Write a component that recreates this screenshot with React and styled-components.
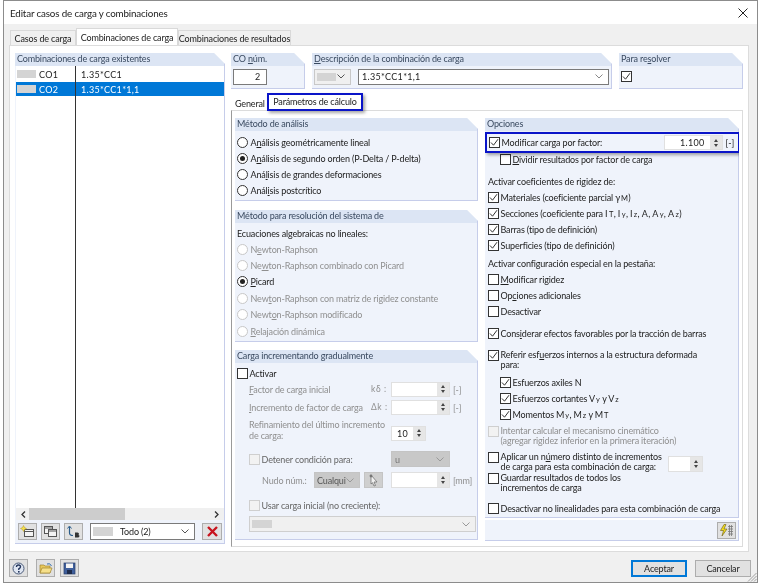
import React from 'react';
import styled, { createGlobalStyle } from 'styled-components';

const GlobalStyle = createGlobalStyle`
  html, body {
    margin: 0;
    padding: 0;
    background: #fff;
  }
  body {
    font-family: "Lato", "Open Sans", sans-serif;
    font-size: 9px;
    letter-spacing: -0.15px;
    color: #222;
    overflow: hidden;
  }
  u {
    text-underline-offset: 1px;
  }
`;

const Dialog = styled.div`
  box-sizing: border-box;
  width: 755px;
  height: 583px;
  margin-left: 3px;
  border: 1px solid #8c8c8c;
  display: flex;
  flex-direction: column;
  background: #f0f0f0;
  position: relative;
  filter: blur(0.3px);
`;

const TitleBar = styled.div`
  height: 23px;
  background: #fff;
  display: flex;
  align-items: center;
  justify-content: space-between;
  padding: 0 9px 0 6px;
  font-size: 9.8px;
  flex: none;
`;

const CloseIcon = styled.svg`
  width: 10px;
  height: 10px;
  stroke: #222;
  stroke-width: 1;
`;

const TabStrip = styled.div`
  display: flex;
  align-items: flex-end;
  height: 21px;
  padding-left: 6px;
  flex: none;
`;

const Tab = styled.div`
  width: ${(p) => p.$w}px;
  height: ${(p) => (p.$active ? 17 : 15)}px;
  box-sizing: border-box;
  display: flex;
  align-items: center;
  justify-content: center;
  background: ${(p) => (p.$active ? '#fff' : '#f0f0f0')};
  border: 1px solid #d9d9d9;
  border-bottom: none;
  white-space: nowrap;
  flex: none;
`;

const MainPanel = styled.div`
  margin-left: 5px;
  width: 740px;
  height: 507px;
  box-sizing: border-box;
  background: #fff;
  border: 1px solid #dcdcdc;
  padding: 7px 5px 5px 5px;
  display: flex;
  gap: 6px;
  flex: none;
`;

const Group = styled.section`
  display: flex;
  flex-direction: column;
  box-sizing: border-box;
  width: ${(p) => (p.$w ? `${p.$w}px` : 'auto')};
  height: ${(p) => (p.$h ? `${p.$h}px` : 'auto')};
  margin-top: ${(p) => p.$mt || 0}px;
  background: #eff3fb;
  border-bottom: 1px solid #c6cdea;
  border-right: 1px solid #c6cdea;
  clip-path: polygon(0 0, calc(100% - 11px) 0, 100% 11px, 100% 100%, 0 100%);
  flex: none;
`;

const GroupTitle = styled.div`
  height: 13px;
  line-height: 12px;
  padding-left: 2px;
  background: #dce5f4;
  color: #3a4a60;
  flex: none;
  white-space: nowrap;
`;

const ListGroup = styled(Group)`
  width: 210px;
  height: 491px;
`;

const ListBody = styled.div`
  height: 442px;
  margin-left: 1px;
  background: #fff;
  position: relative;
  display: flex;
  flex-direction: column;
  padding-top: 1px;
  box-sizing: border-box;
  flex: none;
`;

const ColumnLine = styled.div`
  position: absolute;
  left: 59px;
  top: 0;
  bottom: 0;
  width: 1px;
  background: #333;
`;

const ListRow = styled.div`
  display: flex;
  align-items: center;
  height: 14px;
  margin-bottom: 1px;
  background: ${(p) => (p.$selected ? '#0078d7' : '#fff')};
  color: ${(p) => (p.$selected ? '#fff' : '#222')};
  letter-spacing: 0.3px;
`;

const Swatch = styled.span`
  display: block;
  width: ${(p) => p.$w || 19}px;
  height: ${(p) => p.$h || 8}px;
  background: #d4d4d4;
  margin-left: ${(p) => p.$ml ?? 1}px;
  flex: none;
`;

const ListCode = styled.span`
  width: 39px;
  padding-left: 3px;
`;

const ListDesc = styled.span`
  padding-left: 3px;
`;

const ScrollBar = styled.div`
  height: 12px;
  margin-left: 1px;
  background: #f0f0f0;
  display: flex;
  align-items: center;
  justify-content: space-between;
  position: relative;
  padding: 0 5px;
  flex: none;
`;

const ScrollThumb = styled.div`
  position: absolute;
  left: 13px;
  top: 0;
  width: 96px;
  height: 12px;
  background: #cdcdcd;
`;

const ListTools = styled.div`
  display: flex;
  align-items: center;
  padding: 3px 0 0 3px;
`;

const IconButton = styled.div`
  box-sizing: border-box;
  width: ${(p) => p.$w || 19}px;
  height: ${(p) => p.$h || 17}px;
  margin-right: ${(p) => p.$mr ?? 4}px;
  margin-left: ${(p) => p.$ml || 0}px;
  background: ${(p) => p.$bg || '#e1e1e1'};
  border: 1px solid ${(p) => p.$border || '#adadad'};
  display: flex;
  align-items: center;
  justify-content: center;
  flex: none;
`;

const Combo = styled.div`
  box-sizing: border-box;
  width: ${(p) => p.$w}px;
  height: ${(p) => p.$h || 16}px;
  margin: ${(p) => p.$m || 0};
  display: flex;
  align-items: center;
  justify-content: space-between;
  padding: 0 5px 0 ${(p) => p.$pl ?? 3}px;
  background: ${(p) => p.$bg || '#fff'};
  border: 1px solid ${(p) => p.$border || '#7a7a7a'};
  color: ${(p) => p.$color || '#222'};
  flex: none;
  letter-spacing: ${(p) => p.$ls || '-0.15px'};
  white-space: nowrap;
  overflow: hidden;
`;

const ComboText = styled.span`
  flex: 1;
  margin-left: ${(p) => p.$ml || 0}px;
`;

const Chevron = styled.svg`
  width: 8px;
  height: 5px;
  fill: none;
  stroke: ${(p) => p.$c || '#555'};
  stroke-width: 1;
  flex: none;
`;

const RightColumn = styled.div`
  width: 512px;
  display: flex;
  flex-direction: column;
`;

const TopRow = styled.div`
  display: flex;
  gap: 7px;
  height: 36px;
  flex: none;
`;

const TopBody = styled.div`
  flex: 1;
  display: flex;
  align-items: center;
  padding-left: 2px;
  padding-bottom: 1px;
`;

const NumBox = styled.div`
  box-sizing: border-box;
  width: 34px;
  height: 16px;
  border: 1px solid #7a7a7a;
  background: #fff;
  display: flex;
  align-items: center;
  justify-content: flex-end;
  padding-right: 6px;
`;

const SubTabs = styled.div`
  height: 22px;
  display: flex;
  align-items: flex-end;
  padding-left: 1px;
  flex: none;
`;

const SubTab = styled.div`
  width: 34px;
  height: 13px;
  padding-left: 3px;
  box-sizing: border-box;
  display: flex;
  align-items: center;
  margin-bottom: 1px;
`;

const HighlightTab = styled.div`
  box-sizing: border-box;
  width: 96px;
  height: 18px;
  margin-left: 1px;
  padding-bottom: 2px;
  display: flex;
  align-items: center;
  justify-content: center;
  background: #fff;
  border: 2px solid #0a14c8;
  box-shadow: 2px 2px 3px rgba(0, 0, 0, 0.35);
  position: relative;
  z-index: 2;
  white-space: nowrap;
`;

const SubPanel = styled.div`
  height: 437px;
  box-sizing: border-box;
  margin-top: -1px;
  background: #fff;
  border: 1px solid #dcdcdc;
  border-left-color: #9a9a9a;
  padding: 7px 3px 5px 3px;
  display: flex;
  gap: 7px;
  flex: none;
`;

const Column = styled.div`
  display: flex;
  flex-direction: column;
  width: ${(p) => p.$w}px;
`;

const Body = styled.div`
  padding: ${(p) => p.$pad || '2px 0 0 2px'};
  display: flex;
  flex-direction: column;
  flex: 1;
`;

const Row = styled.div`
  display: flex;
  align-items: ${(p) => p.$align || 'center'};
  min-height: 16px;
  margin-top: ${(p) => p.$mt || 0}px;
  margin-left: ${(p) => p.$ml || 0}px;
  color: ${(p) => (p.$muted ? '#8f8f8f' : 'inherit')};
  white-space: nowrap;
`;

const Multi = styled.span`
  display: block;
  line-height: ${(p) => p.$lh || 10}px;
`;

const Strong = styled.span`
  color: #666;
`;

const BoxMark = styled.span`
  box-sizing: border-box;
  width: 11px;
  height: 11px;
  margin-right: 1.5px;
  margin-top: ${(p) => p.$mt || 0}px;
  border: 1px solid ${(p) => (p.$disabled ? '#cfcfcf' : '#333')};
  background: ${(p) => (p.$disabled ? '#f2f2f2' : '#fff')};
  display: flex;
  align-items: center;
  justify-content: center;
  flex: none;
`;

const Tick = styled.svg`
  width: 9px;
  height: 9px;
  fill: none;
  stroke: #333;
  stroke-width: 1;
`;

const RadioMark = styled.span`
  box-sizing: border-box;
  width: 11px;
  height: 11px;
  margin-right: 2.5px;
  border-radius: 50%;
  border: 1px solid ${(p) => (p.$disabled ? '#c8c8c8' : '#333')};
  background: #fff;
  display: flex;
  align-items: center;
  justify-content: center;
  flex: none;
`;

const RadioDot = styled.span`
  width: 5px;
  height: 5px;
  border-radius: 50%;
  background: #222;
`;

const SpinField = styled.div`
  box-sizing: border-box;
  width: ${(p) => p.$w || 59}px;
  height: ${(p) => p.$h || 15}px;
  margin-left: ${(p) => p.$ml || 0}px;
  margin-top: ${(p) => p.$mt || 0}px;
  display: flex;
  border: 1px solid #e0e0e0;
  background: #fff;
  flex: none;
`;

const SpinValue = styled.span`
  flex: 1;
  text-align: right;
  padding-right: 5px;
  line-height: 13px;
  letter-spacing: 0.3px;
  color: #222;
`;

const SpinButtons = styled.span`
  width: 12px;
  background: #e6e6e6;
  display: flex;
  flex-direction: column;
  align-items: center;
  justify-content: center;
  gap: 2px;
  flex: none;
`;

const Arrow = styled.span`
  width: 0;
  height: 0;
  border-left: 2.5px solid transparent;
  border-right: 2.5px solid transparent;
  ${(p) => (p.$down ? 'border-top: 3px solid #444;' : 'border-bottom: 3px solid #444;')}
`;

const FieldLabel = styled.span`
  width: ${(p) => p.$w}px;
  flex: none;
`;

const Unit = styled.span`
  margin-left: 3px;
  margin-right: ${(p) => p.$mr || 0}px;
`;

const SymbolText = styled.span`
  width: 15px;
  letter-spacing: 0.6px;
  font-size: 8.5px;
  flex: none;
`;

const Small = styled.span`
  font-size: 7.5px;
  letter-spacing: 0.3px;
  margin-left: 1px;
`;

const Sym = styled.span`
  letter-spacing: 0.4px;
`;

const FactorRow = styled.div`
  box-sizing: border-box;
  height: 21px;
  width: 255px;
  margin: 1px 0 0 -3px;
  border: 2px solid #0a14c8;
  box-shadow: 2px 2px 3px rgba(0, 0, 0, 0.35);
  display: flex;
  align-items: center;
  padding-left: 2px;
  position: relative;
  z-index: 2;
  background: #eff3fb;
  flex: none;
`;

const FactorSpacer = styled.span`
  flex: 1;
`;

const BoltBar = styled.div`
  margin-top: 2px;
  height: 20px;
  background: #eff3fb;
  border-bottom: 1px solid #c6cdea;
  border-right: 1px solid #c6cdea;
  display: flex;
  align-items: center;
  justify-content: flex-end;
  padding-right: 2px;
  flex: none;
`;

const Footer = styled.div`
  flex: 1;
  display: flex;
  align-items: flex-start;
  padding: 7px 6px 0 5px;
`;

const FooterSpacer = styled.span`
  flex: 1;
`;

const FooterButton = styled.div`
  box-sizing: border-box;
  width: 56px;
  height: 17px;
  margin-top: 1px;
  margin-left: 8px;
  display: flex;
  align-items: center;
  justify-content: center;
  background: #e1e1e1;
  border: ${(p) => (p.$primary ? '2px solid #0078d7' : '1px solid #adadad')};
`;

const Grip = styled.svg`
  position: absolute;
  right: 0;
  bottom: 0;
  width: 11px;
  height: 11px;
  stroke: #a0a0a0;
  stroke-width: 1;
`;

const ChevronDown = ({ c }) => (
  <Chevron viewBox="0 0 8 5" $c={c}>
    <path d="M0.5 0.5 L4 4 L7.5 0.5" />
  </Chevron>
);

const TickMark = () => (
  <Tick viewBox="0 0 9 9">
    <path d="M1 4.5 L3.5 7.2 L8 1.2" />
  </Tick>
);

const Check = ({ on, disabled, children, mt, ml, align }) => (
  <Row $mt={mt} $ml={ml} $muted={disabled} $align={align}>
    <BoxMark $disabled={disabled}>{on && <TickMark />}</BoxMark>
    <span>{children}</span>
  </Row>
);

const Radio = ({ on, disabled, children, mt }) => (
  <Row $mt={mt} $muted={disabled}>
    <RadioMark $disabled={disabled}>{on && <RadioDot />}</RadioMark>
    <span>{children}</span>
  </Row>
);

const Spin = ({ value, w, h, ml, mt }) => (
  <SpinField $w={w} $h={h} $ml={ml} $mt={mt}>
    <SpinValue>{value}</SpinValue>
    <SpinButtons>
      <Arrow />
      <Arrow $down />
    </SpinButtons>
  </SpinField>
);

const App = () => {
  return (
    <Dialog>
      <GlobalStyle />
      <TitleBar>
        <span>Editar casos de carga y combinaciones</span>
        <CloseIcon viewBox="0 0 10 10">
          <path d="M0.5 0.5 L9.5 9.5 M9.5 0.5 L0.5 9.5" />
        </CloseIcon>
      </TitleBar>

      <TabStrip>
        <Tab $w={66}>Casos de carga</Tab>
        <Tab $w={102} $active>Combinaciones de carga</Tab>
        <Tab $w={113}>Combinaciones de resultados</Tab>
      </TabStrip>

      <MainPanel>
        <ListGroup>
          <GroupTitle>Combinaciones de carga existentes</GroupTitle>
          <ListBody>
            <ListRow>
              <Swatch />
              <ListCode>CO1</ListCode>
              <ListDesc>1.35*CC1</ListDesc>
            </ListRow>
            <ListRow $selected>
              <Swatch />
              <ListCode>CO2</ListCode>
              <ListDesc>1.35*CC1*1,1</ListDesc>
            </ListRow>
            <ColumnLine />
          </ListBody>
          <ScrollBar>
            <svg width="5" height="7" viewBox="0 0 5 7" fill="none" stroke="#333" strokeWidth="1.3">
              <path d="M4 0.5 L1 3.5 L4 6.5" />
            </svg>
            <ScrollThumb />
            <svg width="5" height="7" viewBox="0 0 5 7" fill="none" stroke="#333" strokeWidth="1.3">
              <path d="M1 0.5 L4 3.5 L1 6.5" />
            </svg>
          </ScrollBar>
          <ListTools>
            <IconButton>
              <svg width="15" height="13" viewBox="0 0 15 13">
                <rect x="4.5" y="4.5" width="9" height="7" fill="#f4f4f4" stroke="#555" />
                <path d="M4.5 6.5 H13.5" stroke="#555" />
                <path d="M3.5 0.5 L4.5 2.5 L6.5 3.5 L4.5 4.5 L3.5 6.5 L2.5 4.5 L0.5 3.5 L2.5 2.5 Z" fill="#f4e04a" stroke="#b49a20" strokeWidth="0.5" />
              </svg>
            </IconButton>
            <IconButton>
              <svg width="15" height="13" viewBox="0 0 15 13" fill="#f4f4f4" stroke="#555">
                <rect x="1.5" y="1.5" width="8" height="7" />
                <rect x="5.5" y="4.5" width="8" height="7" />
                <path d="M1.5 3 H9.5 M5.5 6 H13.5" />
              </svg>
            </IconButton>
            <IconButton $mr={7}>
              <svg width="15" height="13" viewBox="0 0 15 13" fill="none">
                <path d="M3.5 2 V8 Q3.5 10.5 7 10.5" stroke="#2b5d8c" strokeWidth="1.2" />
                <path d="M1.5 3.5 L3.5 1 L5.5 3.5" stroke="#2b5d8c" />
                <path d="M9 7.5 H11.5 Q13 7.5 13 9 Q13 10 12 10 Q13.5 10 13.5 11 Q13.5 12.5 11.5 12.5 H9 Z" fill="#333" />
              </svg>
            </IconButton>
            <Combo $w={105} $h={17} $pl={2}>
              <Swatch $w={20} $h={9} $ml={0} />
              <ComboText $ml={7}>Todo (2)</ComboText>
              <ChevronDown />
            </Combo>
            <IconButton $w={20} $h={17} $mr={0} $ml={7}>
              <svg width="11" height="11" viewBox="0 0 11 11" fill="none" stroke="#c8141e" strokeWidth="2.4">
                <path d="M1 1 L10 10 M10 1 L1 10" />
              </svg>
            </IconButton>
          </ListTools>
        </ListGroup>

        <RightColumn>
          <TopRow>
            <Group $w={74}>
              <GroupTitle>CO <u>n</u>úm.</GroupTitle>
              <TopBody>
                <NumBox>2</NumBox>
              </TopBody>
            </Group>
            <Group $w={300}>
              <GroupTitle><u>D</u>escripción de la combinación de carga</GroupTitle>
              <TopBody>
                <Combo $w={37} $border="#c8c8c8" $bg="#f0f0f0" $pl={2}>
                  <Swatch $w={19} $h={8} $ml={0} />
                  <ChevronDown />
                </Combo>
                <Combo $w={251} $m="0 0 0 7px" $pl={3} $ls="0.3px">
                  <ComboText>1.35*CC1*1,1</ComboText>
                  <ChevronDown c="#888" />
                </Combo>
              </TopBody>
            </Group>
            <Group $w={124}>
              <GroupTitle>Para re<u>s</u>olver</GroupTitle>
              <TopBody>
                <BoxMark>
                  <TickMark />
                </BoxMark>
              </TopBody>
            </Group>
          </TopRow>

          <SubTabs>
            <SubTab>General</SubTab>
            <HighlightTab>Parámetros de cálculo</HighlightTab>
          </SubTabs>

          <SubPanel>
            <Column $w={244}>
              <Group $h={83}>
                <GroupTitle>Método de análisis</GroupTitle>
                <Body $pad="3px 0 0 2px">
                  <Radio>A<u>n</u>álisis geométricamente lineal</Radio>
                  <Radio on>A<u>n</u>álisis de segundo orden (P-Delta / P-delta)</Radio>
                  <Radio>Aná<u>l</u>isis de grandes deformaciones</Radio>
                  <Radio>Anál<u>i</u>sis postcrítico</Radio>
                </Body>
              </Group>

              <Group $h={132} $mt={9}>
                <GroupTitle>Método para resolución del sistema de</GroupTitle>
                <Body>
                  <Row>Ecuaciones algebraicas no lineales:</Row>
                  <Radio disabled>N<u>e</u>wton-Raphson</Radio>
                  <Radio disabled>Ne<u>w</u>ton-Raphson combinado con Picard</Radio>
                  <Radio on><u>P</u>icard</Radio>
                  <Radio disabled mt={1}>New<u>t</u>on-Raphson con matriz de rigidez constante</Radio>
                  <Radio disabled>Newt<u>o</u>n-Raphson modificado</Radio>
                  <Radio disabled mt={1}><u>R</u>elajación dinámica</Radio>
                </Body>
              </Group>

              <Group $h={190} $mt={8}>
                <GroupTitle>Carga incrementando gradualmente</GroupTitle>
                <Body>
                  <Check>Activar</Check>
                  <Row $muted $ml={12}>
                    <FieldLabel $w={122}><u>F</u>actor de carga inicial</FieldLabel>
                    <SymbolText>kδ :</SymbolText>
                    <Spin ml={5} />
                    <Unit>[-]</Unit>
                  </Row>
                  <Row $muted $ml={12} $mt={2}>
                    <FieldLabel $w={122}><u>I</u>ncremento de factor de carga</FieldLabel>
                    <SymbolText>Δk :</SymbolText>
                    <Spin ml={5} />
                    <Unit>[-]</Unit>
                  </Row>
                  <Row $muted $ml={12} $mt={4}>
                    <FieldLabel $w={142}>
                      <Multi $lh={11}>Refinamiento del último incremento<br />de carga:</Multi>
                    </FieldLabel>
                    <Spin value="10" w={35} mt={6} />
                  </Row>
                  <Row $ml={12} $mt={10} $muted>
                    <BoxMark $disabled />
                    <FieldLabel $w={129.5}><Strong>Detener condición para:</Strong></FieldLabel>
                    <Combo $w={59} $border="#c4c4c4" $bg="#c8c8c8" $color="#777">
                      <ComboText>u</ComboText>
                      <ChevronDown c="#999" />
                    </Combo>
                  </Row>
                  <Row $ml={25} $mt={5} $muted>
                    <FieldLabel $w={52}>Nudo núm.:</FieldLabel>
                    <Combo $w={46} $border="#c4c4c4" $bg="#c8c8c8" $color="#555" $pl={2}>
                      <ComboText>Cualqui</ComboText>
                      <ChevronDown c="#999" />
                    </Combo>
                    <IconButton $w={19} $h={16} $mr={8} $ml={4} $bg="#cfcfcf" $border="#c4c4c4">
                      <svg width="11" height="13" viewBox="0 0 11 13">
                        <path d="M3 1 L9 8 L6 8 L7.5 11.5 L6 12 L4.5 8.7 L3 10 Z" fill="#f0f0f0" stroke="#666" strokeWidth="0.7" />
                        <circle cx="3" cy="2" r="1.4" fill="#777" />
                      </svg>
                    </IconButton>
                    <Spin h={16} />
                    <Unit>[mm]</Unit>
                  </Row>
                  <Check disabled ml={12} mt={9}>
                    <Strong>Usar carga inicial (no creciente):</Strong>
                  </Check>
                  <Row $ml={12} $mt={3}>
                    <Combo $w={227} $border="#cfcfcf" $bg="#f0f0f0" $pl={2}>
                      <Swatch $w={20} $h={8} $ml={0} />
                      <ChevronDown c="#999" />
                    </Combo>
                  </Row>
                </Body>
              </Group>
            </Column>

            <Column $w={254}>
              <Group $h={400}>
                <GroupTitle>Opciones</GroupTitle>
                <Body $pad="0 0 0 3px">
                  <FactorRow>
                    <BoxMark>
                      <TickMark />
                    </BoxMark>
                    Modificar carga por factor:
                    <FactorSpacer />
                    <Spin value="1.100" w={59} h={15} />
                    <Unit $mr={4}>[-]</Unit>
                  </FactorRow>
                  <Check ml={12} mt={-2}><u>D</u>ividir resultados por factor de carga</Check>
                  <Row $mt={6}>Activar coeficientes de rigidez de:</Row>
                  <Check on>Materiales (coeficiente parcial γ<Small>M</Small>)</Check>
                  <Check on>Secciones (coeficiente para <Sym>I</Sym><Small>T</Small>, <Sym>I</Sym><Small>y</Small>, <Sym>I</Sym><Small>z</Small>, <Sym>A</Sym>, <Sym>A</Sym><Small>y</Small>, <Sym>A</Sym><Small>z</Small>)</Check>
                  <Check on>Barras (tipo de definición)</Check>
                  <Check on>Superficies (tipo de definición)</Check>
                  <Row $mt={2}>Activar configuración especial en la pestaña:</Row>
                  <Check><u>M</u>odificar rigidez</Check>
                  <Check>Op<u>c</u>iones adicionales</Check>
                  <Check>Desactivar</Check>
                  <Check on mt={6}>Cons<u>i</u>derar efectos favorables por la tracción de barras</Check>
                  <Check on mt={9} align="flex-start">
                    <Multi>Referir esf<u>u</u>erzos internos a la estructura deformada<br />para:</Multi>
                  </Check>
                  <Check on ml={12} mt={4}>Esfuerzos axiles N</Check>
                  <Check on ml={12}>Esfuerzos cortantes V<Small>y</Small> y V<Small>z</Small></Check>
                  <Check on ml={12}>Momentos M<Small>y</Small>, M<Small>z</Small> y M<Small>T</Small></Check>
                  <Check disabled mt={4} align="flex-start">
                    <Multi>Intentar calcular el mecanismo cinemático<br />(agregar rigidez inferior en la primera iteración)</Multi>
                  </Check>
                  <Row $mt={6} $align="flex-start">
                    <BoxMark />
                    <FieldLabel $w={167}>
                      <Multi>Aplicar un n<u>ú</u>mero distinto de incrementos<br />de carga para esta combinación de carga:</Multi>
                    </FieldLabel>
                    <Spin w={35} h={16} mt={4} />
                  </Row>
                  <Check mt={1} align="flex-start">
                    <Multi>Guardar resultados de todos los<br />incrementos de carga</Multi>
                  </Check>
                  <Check mt={7}>Desactivar no linealidades para esta combinación de carga</Check>
                </Body>
              </Group>
              <BoltBar>
                <IconButton $w={19} $h={17} $mr={0}>
                  <svg width="15" height="13" viewBox="0 0 15 13" fill="none">
                    <path d="M9 2.5 H14 M9 5 H14 M9 7.5 H14 M9 10 H14 M10.5 1 V12 M12.5 1 V12" stroke="#777" strokeWidth="0.8" />
                    <path d="M5 0.5 L1.5 6.5 L4.5 6.5 L3 12 L8 5 L5 5 L7 0.5 Z" fill="#f2dc1e" stroke="#6a5a10" strokeWidth="0.6" />
                  </svg>
                </IconButton>
              </BoltBar>
            </Column>
          </SubPanel>
        </RightColumn>
      </MainPanel>

      <Footer>
        <IconButton $mr={8} $w={19} $h={18}>
          <svg width="13" height="13" viewBox="0 0 13 13">
            <circle cx="6.5" cy="6.5" r="5.5" fill="#dfe6f2" stroke="#4a5a78" />
            <path d="M4.5 5 Q4.5 3 6.5 3 Q8.5 3 8.5 4.8 Q8.5 6 6.8 6.8 V8" fill="none" stroke="#24365c" strokeWidth="1.4" />
            <rect x="6" y="9" width="1.6" height="1.6" fill="#24365c" />
          </svg>
        </IconButton>
        <IconButton $mr={5} $w={19} $h={18}>
          <svg width="14" height="12" viewBox="0 0 14 12">
            <path d="M1 3 H5 L6 4 H11 V11 H1 Z" fill="#e8c858" stroke="#a08430" strokeWidth="0.7" />
            <path d="M1 11 L3 6 H13 L11 11 Z" fill="#f6e08a" stroke="#a08430" strokeWidth="0.7" />
            <path d="M8 2 Q11 0.5 12.5 4" fill="none" stroke="#3570b0" />
          </svg>
        </IconButton>
        <IconButton $mr={0} $w={19} $h={18}>
          <svg width="13" height="13" viewBox="0 0 13 13">
            <rect x="1" y="1" width="11" height="11" fill="#3f5f9c" stroke="#2a3f6c" strokeWidth="0.7" />
            <rect x="3" y="1.5" width="7" height="4.5" fill="#f4f4f4" />
            <rect x="4" y="8" width="5" height="4" fill="#1e2c4c" />
          </svg>
        </IconButton>
        <FooterSpacer />
        <FooterButton $primary>Aceptar</FooterButton>
        <FooterButton>Cancelar</FooterButton>
      </Footer>

      <Grip viewBox="0 0 11 11">
        <path d="M10.5 2 L2 10.5 M10.5 5 L5 10.5 M10.5 8 L8 10.5" />
      </Grip>
    </Dialog>
  );
};

export default App;
